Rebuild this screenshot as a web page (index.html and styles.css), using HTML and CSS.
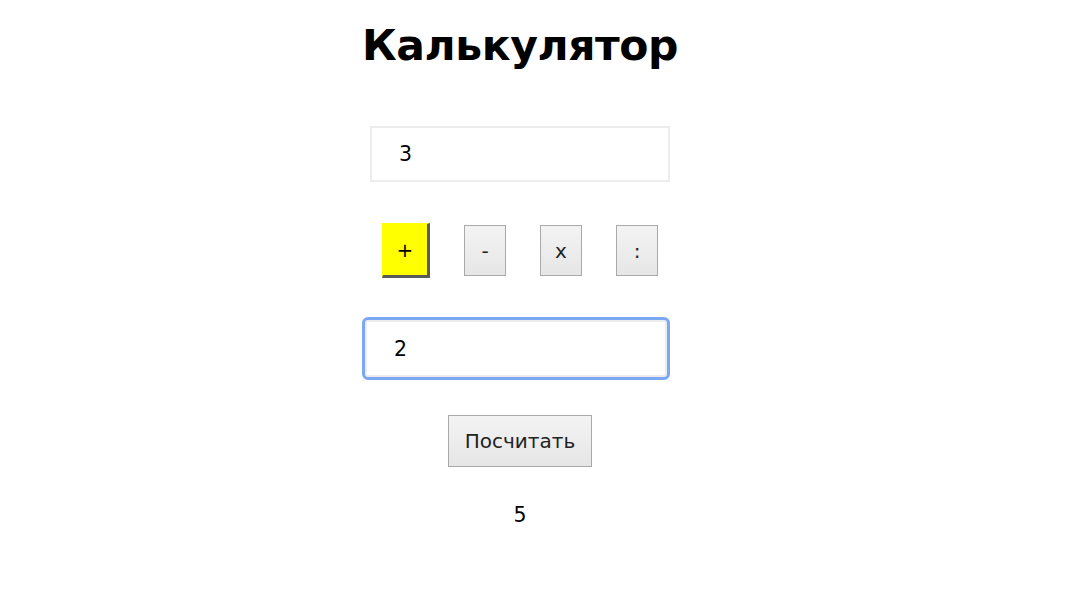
FILE: index.html
```html
<!DOCTYPE html>
<html lang="ru">
<head>
<meta charset="utf-8">
<title>Калькулятор</title>
<link rel="stylesheet" href="styles.css">
</head>
<body>
<main class="calc">
  <h1 class="calc-title">Калькулятор</h1>
  <input class="calc-input" type="text" value="3">
  <div class="ops">
    <button class="op op-active" type="button">+</button>
    <button class="op" type="button">-</button>
    <button class="op" type="button">x</button>
    <button class="op" type="button">:</button>
  </div>
  <input class="calc-input calc-input-focus" type="text" value="2">
  <button class="calc-run" type="button">Посчитать</button>
  <div class="calc-result">5</div>
</main>
</body>
</html>
```
FILE: styles.css
```css
html, body {
  margin: 0;
  padding: 0;
  background: #ffffff;
}
body {
  font-family: "DejaVu Sans", Verdana, sans-serif;
  color: #000;
}
.calc {
  width: 1040px;
  display: flex;
  flex-direction: column;
  align-items: center;
  padding-top: 20px;
}
.calc-title {
  margin: 0;
  font-size: 42.5px;
  font-weight: bold;
  line-height: 52px;
  letter-spacing: -0.4px;
}
.calc-input {
  box-sizing: border-box;
  width: 300px;
  height: 56px;
  margin-top: 54px;
  padding: 0 0 0 27px;
  border: 2px solid #ececec;
  font-family: "DejaVu Sans", Verdana, sans-serif;
  font-size: 20.5px;
  color: #000;
  background: #fff;
  outline: none;
}
.calc-input-focus {
  margin-top: 42px;
  height: 57px;
  width: 302px;
  margin-right: 8px;
  outline: 3px solid #7ca8f3;
  outline-offset: 0;
  border-radius: 3px;
}
.ops {
  display: flex;
  align-items: center;
  gap: 34px;
  margin-top: 41px;
}
.op {
  box-sizing: border-box;
  width: 42px;
  height: 51px;
  padding: 0;
  border: 1px solid #a9a9a9;
  background: linear-gradient(#f3f3f3, #e6e6e6);
  font-family: "DejaVu Sans", Verdana, sans-serif;
  font-size: 20px;
  color: #222;
}
.op-active {
  width: 48px;
  height: 55px;
  border-style: solid;
  border-width: 1px 3px 3px 1px;
  border-color: #ffff00 #5a5a5a #5a5a5a #ffff00;
  background: #ffff00;
  color: #000;
}
.calc-run {
  box-sizing: border-box;
  width: 144px;
  height: 52px;
  margin-top: 38px;
  padding: 0;
  border: 1px solid #a9a9a9;
  background: linear-gradient(#f3f3f3, #e6e6e6);
  font-family: "DejaVu Sans", Verdana, sans-serif;
  font-size: 20px;
  color: #222;
}
.calc-result {
  margin-top: 36px;
  font-size: 20.5px;
  line-height: 24px;
}
```
